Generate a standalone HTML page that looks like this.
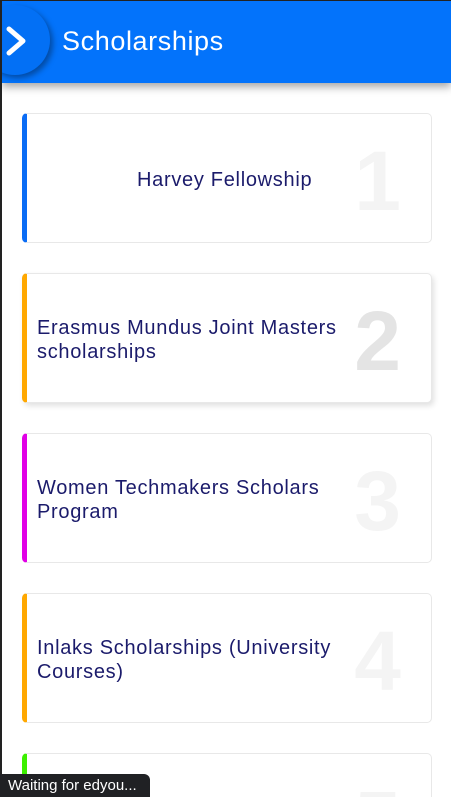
<!DOCTYPE html>
<html><head><meta charset="utf-8"><style>
*{margin:0;padding:0;box-sizing:border-box}
html,body{width:451px;height:797px;overflow:hidden}
body{background:#fff;font-family:"Liberation Sans",sans-serif;position:relative}
.fl{position:absolute;left:0;top:0;width:2px;height:797px;background:#222;z-index:5}
.ft{position:absolute;left:0;top:0;width:451px;height:1px;background:#222;z-index:5}
.hdr{position:absolute;left:2px;top:1px;width:449px;height:82px;background:#0373fb;box-shadow:0 4px 8px rgba(0,0,0,.35);overflow:hidden}
.circ{position:absolute;left:-22px;top:4px;width:70px;height:70px;border-radius:50%;background:#0370f5;box-shadow:3px 3px 6px rgba(0,0,0,.35)}
.hdr svg{position:absolute;left:2px;top:24px}
.hdr h1{position:absolute;left:60px;top:25px;color:#fff;font-size:27px;font-weight:normal;letter-spacing:.6px}
.card{position:absolute;left:22px;width:410px;height:130px;border:1px solid #e8e8e8;border-left:5px solid;border-radius:5px;background:#fff;overflow:hidden}
.card .t{position:absolute;left:10px;right:70px;top:50%;transform:translateY(-50%);margin-top:2px;color:#1b1b6b;font-size:20px;line-height:24px;letter-spacing:.7px}
.card .n{position:absolute;right:30px;top:22px;font-size:84px;line-height:90px;color:#f4f4f4;font-weight:bold}
.tip{position:absolute;left:0;top:774px;width:150px;height:23px;background:#202124;border-radius:0 6px 0 0;color:#fff;font-size:15px;padding:3px 0 0 8px;z-index:6}
</style></head><body>
<div class="fl"></div><div class="ft"></div>
<div class="hdr"><div class="circ"></div>
<svg width="24" height="32" viewBox="0 0 24 32"><path d="M5 4 L19 16 L5 28" stroke="#fff" stroke-width="5" fill="none" stroke-linecap="round" stroke-linejoin="round"/></svg>
<h1>Scholarships</h1></div>
<div class="card" style="top:113px;border-left-color:#0a6cf5"><div class="t" style="left:110px">Harvey Fellowship</div><div class="n">1</div></div>
<div class="card" style="top:273px;border-left-color:#ffa800;box-shadow:2px 3px 6px rgba(0,0,0,.12);overflow:visible"><div class="t">Erasmus Mundus Joint Masters scholarships</div><div class="n" style="color:#e4e4e4">2</div></div>
<div class="card" style="top:433px;border-left-color:#e100e6"><div class="t">Women Techmakers Scholars Program</div><div class="n">3</div></div>
<div class="card" style="top:593px;border-left-color:#ffa800"><div class="t">Inlaks Scholarships (University Courses)</div><div class="n">4</div></div>
<div class="card" style="top:753px;height:44px;border-bottom:none;border-radius:5px 5px 0 0;border-left-color:#3cf000"><div class="n">5</div></div>
<div class="tip">Waiting for edyou...</div>
</body></html>
